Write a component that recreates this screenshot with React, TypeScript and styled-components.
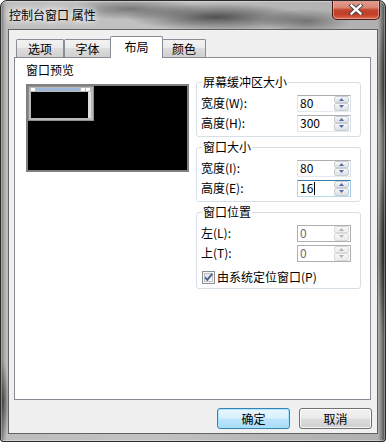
import React from "react";
import styled, { createGlobalStyle } from "styled-components";

const GlobalStyle = createGlobalStyle`
  html, body { margin: 0; padding: 0; background: #ffffff; }
  body {
    font-family: "Noto Sans CJK SC", "Liberation Sans", sans-serif;
    font-size: 12px;
    color: #000;
  }
  * { box-sizing: border-box; }
`;

const Window = styled.div`
  width: 386px;
  height: 442px;
  display: flex;
  flex-direction: column;
  border: 1px solid #2a2a2a;
  border-radius: 7px 7px 3px 3px;
  overflow: hidden;
  background:
    radial-gradient(ellipse 90px 14px at 215px 16px, rgba(35, 35, 35, 0.7), rgba(35, 35, 35, 0) 100%),
    radial-gradient(ellipse 70px 11px at 130px 8px, rgba(60, 60, 60, 0.55), rgba(60, 60, 60, 0) 100%),
    radial-gradient(ellipse 45px 12px at 305px 20px, rgba(50, 50, 50, 0.5), rgba(50, 50, 50, 0) 100%),
    radial-gradient(ellipse 8px 90px at 384px 250px, rgba(10, 10, 10, 0.75), rgba(10, 10, 10, 0) 100%),
    radial-gradient(ellipse 8px 60px at 384px 80px, rgba(20, 20, 20, 0.55), rgba(20, 20, 20, 0) 100%),
    radial-gradient(ellipse 6px 40px at 2px 400px, rgba(20, 20, 20, 0.6), rgba(20, 20, 20, 0) 100%),
    linear-gradient(to right, #6a6a6a 0px, #a9a9a9 3px, #bdbdbd 6px, #c2c2c2 40%, #b6b6b6 70%, #b0b0b0 377px, #8a8a8a 380px, #454545 384px);
  box-shadow: inset 0 0 0 1px rgba(255, 255, 255, 0.35);
`;

const TitleBar = styled.div`
  height: 28px;
  display: flex;
  align-items: flex-start;
  padding-left: 8px;
`;

const TitleText = styled.div`
  margin-top: 7px;
  line-height: 14px;
  font-size: 12px;
  color: #000;
  text-shadow: 0 0 5px #ffffff, 0 0 8px rgba(255, 255, 255, 0.9), 0 0 12px rgba(255, 255, 255, 0.7);
  white-space: pre;
`;

const CloseButton = styled.div`
  margin-left: auto;
  margin-right: 5px;
  margin-top: -1px;
  width: 48px;
  height: 20px;
  border: 1px solid #4b1a12;
  border-top: none;
  border-radius: 0 0 5px 5px;
  background: linear-gradient(#e2a094 0%, #d98574 40%, #c2452d 52%, #c13f26 75%, #dc6a50 100%);
  box-shadow: inset 0 0 0 1px rgba(255, 220, 210, 0.45);
  display: flex;
  align-items: center;
  justify-content: center;
`;

const Client = styled.div`
  height: 405px;
  margin: 0 7px 7px 7px;
  border: 1px solid #626262;
  background: #f0f0f0;
  display: flex;
  flex-direction: column;
  padding: 6px 0 0 5px;
`;

const TabStrip = styled.div`
  display: flex;
  align-items: flex-end;
  height: 21px;
  margin-left: 2px;
  position: relative;
  z-index: 1;
`;

const Tab = styled.div<{ $active?: boolean; $w: number; $overlap?: boolean }>`
  width: ${(p) => p.$w}px;
  height: ${(p) => (p.$active ? 22 : 18)}px;
  margin-bottom: ${(p) => (p.$active ? -1 : 0)}px;
  margin-left: ${(p) => (p.$overlap ? -1 : 0)}px;
  border: 1px solid #898c95;
  border-bottom: none;
  border-radius: 2px 2px 0 0;
  background: ${(p) =>
    p.$active
      ? "#ffffff"
      : "linear-gradient(#f3f3f3 0%, #ebebeb 45%, #dddddd 50%, #cfcfcf 100%)"};
  display: flex;
  align-items: center;
  justify-content: center;
  padding-bottom: ${(p) => (p.$active ? 2 : 0)}px;
  line-height: 14px;
  position: relative;
  z-index: ${(p) => (p.$active ? 2 : 1)};
`;

const Panel = styled.div`
  width: 357px;
  height: 343px;
  border: 1px solid #898c95;
  background: #ffffff;
  display: flex;
  align-items: flex-start;
  gap: 7px;
  padding: 5px 0 0 11px;
`;

const LeftCol = styled.div`
  display: flex;
  flex-direction: column;
`;

const Caption = styled.div`
  line-height: 14px;
`;

const PreviewBox = styled.div`
  margin-top: 7px;
  width: 163px;
  height: 88px;
  border: 2px solid #808080;
  background: #000;
  display: flex;
  align-items: flex-start;
`;

const RightCol = styled.div`
  margin-top: 12px;
  display: flex;
  flex-direction: column;
  gap: 3px;
  width: 165px;
`;

const Group = styled.fieldset`
  margin: 0;
  padding: 4px 9px 3px 4px;
  border: 1px solid #d5dfe5;
  border-radius: 3px;
  min-width: 0;
  width: 165px;
`;

const Legend = styled.legend`
  padding: 0 1px;
  margin-left: 1px;
  line-height: 14px;
  font-size: 12px;
`;

const Row = styled.div`
  display: flex;
  align-items: center;
  justify-content: space-between;
  height: 20px;
`;

const Label = styled.span`
  line-height: 14px;
`;

type SpinState = "normal" | "focus" | "disabled";

const borderColors: Record<SpinState, string> = {
  normal: "#abadb3 #dbdfe6 #e3e9ef #e2e3ea",
  focus: "#3d7bad #a4c9e3 #b7d9ed #b5cfe7",
  disabled: "#afafaf #afafaf #afafaf #afafaf",
};

const SpinBox = styled.div<{ $state: SpinState }>`
  width: 54px;
  height: 17px;
  display: flex;
  border: 1px solid;
  border-color: ${(p) => borderColors[p.$state]};
  background: #ffffff;
`;

const Value = styled.div<{ $disabled?: boolean }>`
  flex: 1;
  display: flex;
  align-items: center;
  padding-left: 2px;
  line-height: 14px;
  color: ${(p) => (p.$disabled ? "#6d6d6d" : "#000")};
`;

const Caret = styled.span`
  display: inline-block;
  width: 1px;
  height: 13px;
  background: #000;
  margin-left: 1px;
`;

const Spinner = styled.div`
  width: 15px;
  margin-right: 1px;
  display: flex;
  flex-direction: column;
`;

const SpinBtn = styled.div<{ $disabled?: boolean }>`
  flex: 1;
  border: 1px solid ${(p) => (p.$disabled ? "#dadada" : "#c9ced6")};
  border-radius: 2px;
  background: ${(p) =>
    p.$disabled
      ? "linear-gradient(#f7f7f7, #ececec)"
      : "linear-gradient(#f6f7f9 0%, #e9ebee 50%, #dcdfe4 100%)"};
  display: flex;
  align-items: center;
  justify-content: center;
`;

const CheckRow = styled.div`
  display: flex;
  align-items: center;
  height: 16px;
  margin-top: 6px;
  margin-left: 1px;
  gap: 2px;
`;

const ButtonRow = styled.div`
  display: flex;
  justify-content: flex-end;
  gap: 9px;
  margin-top: 8px;
  padding-right: 5px;
`;

const DlgButton = styled.div<{ $default?: boolean }>`
  width: 73px;
  height: 21px;
  border: 1px solid ${(p) => (p.$default ? "#3c7fb1" : "#707070")};
  border-radius: 3px;
  background: ${(p) =>
    p.$default
      ? "linear-gradient(#eaf6fd 0%, #d9f0fc 48%, #bee6fd 52%, #a7d9f5 100%)"
      : "linear-gradient(#f2f2f2 0%, #ebebeb 48%, #dddddd 52%, #cfcfcf 100%)"};
  box-shadow: inset 0 0 0 1px
    ${(p) => (p.$default ? "rgba(160, 230, 255, 0.9)" : "rgba(255, 255, 255, 0.8)")};
  display: flex;
  align-items: center;
  justify-content: center;
  line-height: 14px;
`;

const Arrow: React.FC<{ up?: boolean; disabled?: boolean }> = ({ up, disabled }) => (
  <svg width="5" height="3" viewBox="0 0 5 3">
    <path
      d={up ? "M0 3 L2.5 0 L5 3 Z" : "M0 0 L2.5 3 L5 0 Z"}
      fill={disabled ? "#b4b4b4" : "#4d6fa8"}
    />
  </svg>
);

const Spin: React.FC<{ value: string; state?: SpinState }> = ({ value, state = "normal" }) => {
  const disabled = state === "disabled";
  return (
    <SpinBox $state={state}>
      <Value $disabled={disabled}>
        {value}
        {state === "focus" && <Caret />}
      </Value>
      <Spinner>
        <SpinBtn $disabled={disabled}>
          <Arrow up disabled={disabled} />
        </SpinBtn>
        <SpinBtn $disabled={disabled}>
          <Arrow disabled={disabled} />
        </SpinBtn>
      </Spinner>
    </SpinBox>
  );
};

const MiniWindow = () => (
  <svg width="66" height="35" viewBox="0 0 66 35">
    <rect x="0" y="0" width="66" height="35" fill="#8f8f8f" />
    <rect x="1" y="1" width="64" height="33" fill="#b9b9b9" />
    <rect x="3" y="2" width="4" height="3" fill="#ffffff" />
    <rect x="8" y="2" width="44" height="3" fill="#9cb7d8" />
    <rect x="53" y="2" width="4" height="3" fill="#ffffff" />
    <rect x="58" y="2" width="4" height="3" fill="#ffffff" />
    <rect x="3" y="6" width="57" height="26" fill="#000000" />
    <rect x="60" y="6" width="3" height="26" fill="#dedede" />
  </svg>
);

const CheckBox = () => (
  <svg width="13" height="13" viewBox="0 0 13 13">
    <defs>
      <linearGradient id="cbg" x1="0" y1="0" x2="1" y2="1">
        <stop offset="0" stopColor="#dcdcdc" />
        <stop offset="1" stopColor="#ffffff" />
      </linearGradient>
    </defs>
    <rect x="0.5" y="0.5" width="12" height="12" fill="#f4f4f4" stroke="#8e8f8f" />
    <rect x="2.5" y="2.5" width="8" height="8" fill="url(#cbg)" stroke="#c0c4c9" />
    <path d="M3 6.3 L5.3 8.8 L10.2 2.8" fill="none" stroke="#4a5f92" strokeWidth="1.9" />
  </svg>
);

const CloseGlyph = () => (
  <svg width="14" height="11" viewBox="0 0 14 11">
    <path d="M2.5 1.5 L11.5 9.5 M11.5 1.5 L2.5 9.5" stroke="#3a3a3a" strokeWidth="4.2" strokeLinecap="square" />
    <path d="M2.5 1.5 L11.5 9.5 M11.5 1.5 L2.5 9.5" stroke="#ffffff" strokeWidth="2.4" strokeLinecap="square" />
  </svg>
);

export default function App() {
  return (
    <>
      <GlobalStyle />
      <Window>
        <TitleBar>
          <TitleText>控制台窗口 属性</TitleText>
          <CloseButton>
            <CloseGlyph />
          </CloseButton>
        </TitleBar>
        <Client>
          <TabStrip>
            <Tab $w={48}>选项</Tab>
            <Tab $w={47}>字体</Tab>
            <Tab $w={53} $active $overlap>
              布局
            </Tab>
            <Tab $w={44} $overlap>
              颜色
            </Tab>
          </TabStrip>
          <Panel>
            <LeftCol>
              <Caption>窗口预览</Caption>
              <PreviewBox>
                <MiniWindow />
              </PreviewBox>
            </LeftCol>
            <RightCol>
              <Group>
                <Legend>屏幕缓冲区大小</Legend>
                <Row>
                  <Label>宽度(W):</Label>
                  <Spin value="80" />
                </Row>
                <Row>
                  <Label>高度(H):</Label>
                  <Spin value="300" />
                </Row>
              </Group>
              <Group>
                <Legend>窗口大小</Legend>
                <Row>
                  <Label>宽度(I):</Label>
                  <Spin value="80" />
                </Row>
                <Row>
                  <Label>高度(E):</Label>
                  <Spin value="16" state="focus" />
                </Row>
              </Group>
              <Group>
                <Legend>窗口位置</Legend>
                <Row>
                  <Label>左(L):</Label>
                  <Spin value="0" state="disabled" />
                </Row>
                <Row>
                  <Label>上(T):</Label>
                  <Spin value="0" state="disabled" />
                </Row>
                <CheckRow>
                  <CheckBox />
                  <Label>由系统定位窗口(P)</Label>
                </CheckRow>
              </Group>
            </RightCol>
          </Panel>
          <ButtonRow>
            <DlgButton $default>确定</DlgButton>
            <DlgButton>取消</DlgButton>
          </ButtonRow>
        </Client>
      </Window>
    </>
  );
}
